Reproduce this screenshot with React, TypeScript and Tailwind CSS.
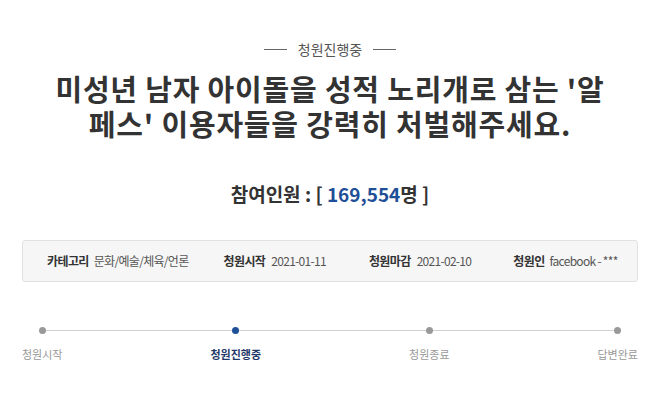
import React from "react";

const steps = [
  { label: "청원시작", active: false },
  { label: "청원진행중", active: true },
  { label: "청원종료", active: false },
  { label: "답변완료", active: false },
];

const info = [
  { k: "카테고리", v: "문화/예술/체육/언론", cls: "flex items-center gap-[5px] whitespace-nowrap" },
  { k: "청원시작", v: "2021-01-11", cls: "ml-[35px] flex items-center gap-[6px] whitespace-nowrap" },
  { k: "청원마감", v: "2021-02-10", cls: "ml-[43px] flex items-center gap-[6px] whitespace-nowrap" },
  { k: "청원인", v: "facebook - ***", cls: "ml-[42px] flex items-center gap-[5px] whitespace-nowrap" },
];

const App = () => {
  return (
    <div
      className="min-h-screen bg-white px-[22px] pt-[38px] text-[#333]"
      style={{ fontFamily: '"Noto Sans CJK KR", "Noto Sans", sans-serif' }}
    >
      <div className="flex items-center justify-center gap-[11px] text-[14px] leading-[22px] text-[#555]">
        <span className="h-px w-[23px] bg-[#666]" />
        <span>청원진행중</span>
        <span className="h-px w-[23px] bg-[#666]" />
      </div>

      <h1 className="mt-[11px] text-center text-[29px] font-bold leading-[35px] tracking-[0.8px] text-[#333]">
        <span className="block">미성년 남자 아이돌을 성적 노리개로 삼는 '알</span>
        <span className="block">페스' 이용자들을 강력히 처벌해주세요.</span>
      </h1>

      <div className="mt-[41px] text-center text-[19px] font-bold leading-[24px] text-[#333]">
        참여인원 : [ <span className="text-[#1f4f97]">169,554</span>명 ]
      </div>

      <div className="mt-[34px] flex h-[42px] items-center rounded-[3px] border border-[#e2e2e2] bg-[#f6f6f6] pl-[24px] text-[12px] leading-[16px]">
        {info.map((i) => (
          <div key={i.k} className={i.cls}>
            <span className="font-bold tracking-[-0.6px] text-[#333]">{i.k}</span>
            <span className="tracking-[-0.7px] text-[#555]">{i.v}</span>
          </div>
        ))}
      </div>

      <div className="relative mt-[45px]">
        <div className="absolute left-[20px] right-[20px] top-[3px] h-px bg-[#d0d0d0]" />
        <div className="relative flex justify-between">
          {steps.map((s) => (
            <div key={s.label} className="flex flex-col items-center">
              <span
                className={
                  s.active
                    ? "h-[7px] w-[7px] rounded-full bg-[#1f4f97]"
                    : "h-[7px] w-[7px] rounded-full bg-[#999]"
                }
              />
              <span
                className={
                  s.active
                    ? "mt-[12px] text-[11px] font-bold leading-[16px] text-[#1f3a6a]"
                    : "mt-[12px] text-[11px] leading-[16px] text-[#999]"
                }
              >
                {s.label}
              </span>
            </div>
          ))}
        </div>
      </div>
    </div>
  );
};

export default App;
